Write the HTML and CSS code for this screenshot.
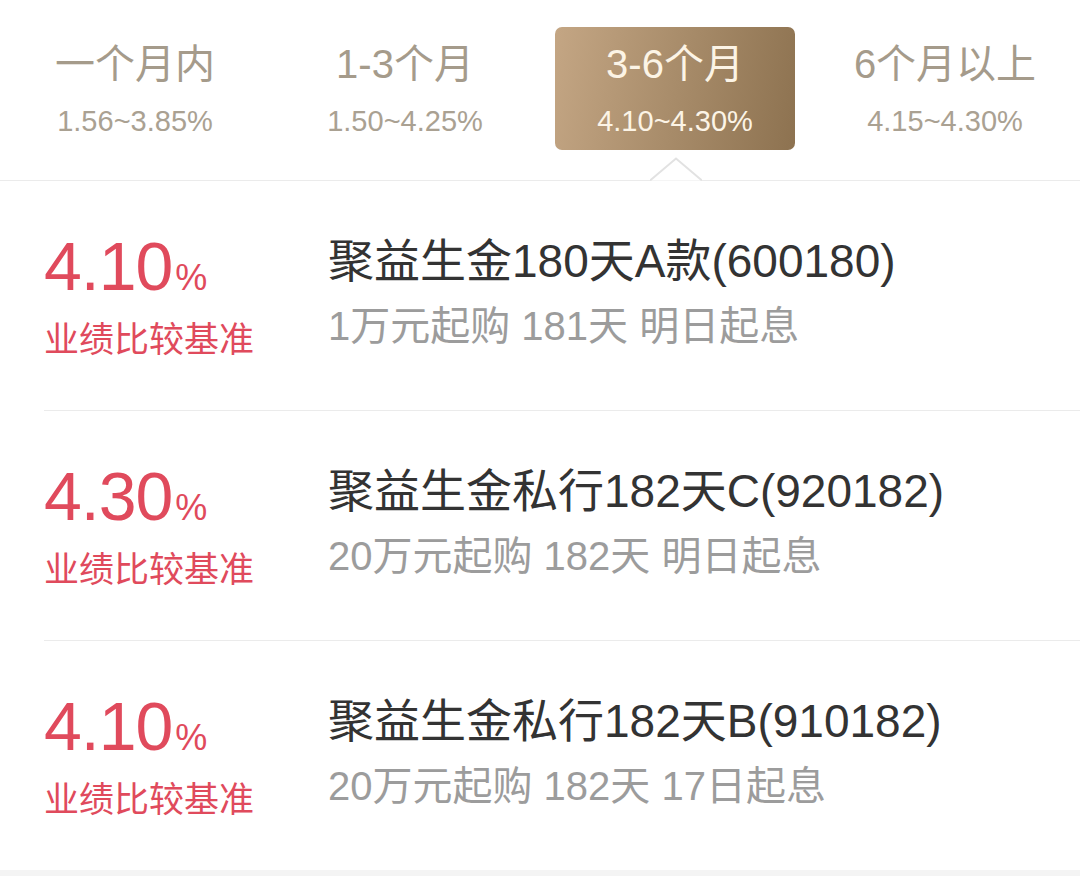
FILE: index.html
```html
<!DOCTYPE html>
<html lang="zh-CN">
<head>
  <meta charset="UTF-8">
  <title>理财产品</title>
  <link rel="stylesheet" href="styles.css">
</head>
<body>
  <header class="tabs">
    <div class="tab">
      <div class="tab-title">一个月内</div>
      <div class="tab-rate">1.56~3.85%</div>
    </div>
    <div class="tab">
      <div class="tab-title">1-3个月</div>
      <div class="tab-rate">1.50~4.25%</div>
    </div>
    <div class="tab active">
      <div class="tab-title">3-6个月</div>
      <div class="tab-rate">4.10~4.30%</div>
      <svg class="caret" width="52" height="24" viewBox="0 0 52 24">
        <polyline points="0,23.5 26,1.5 52,23.5" fill="#fff" stroke="#e2e2e2" stroke-width="2"/>
      </svg>
    </div>
    <div class="tab">
      <div class="tab-title">6个月以上</div>
      <div class="tab-rate">4.15~4.30%</div>
    </div>
  </header>

  <ul class="list">
    <li class="item">
      <div class="left">
        <div class="rate">4.10<span class="pct">%</span></div>
        <div class="label">业绩比较基准</div>
      </div>
      <div class="right">
        <div class="name">聚益生金180天A款(600180)</div>
        <div class="info">1万元起购 181天 明日起息</div>
      </div>
    </li>
    <li class="item">
      <div class="left">
        <div class="rate">4.30<span class="pct">%</span></div>
        <div class="label">业绩比较基准</div>
      </div>
      <div class="right">
        <div class="name">聚益生金私行182天C(920182)</div>
        <div class="info">20万元起购 182天 明日起息</div>
      </div>
    </li>
    <li class="item last">
      <div class="left">
        <div class="rate">4.10<span class="pct">%</span></div>
        <div class="label">业绩比较基准</div>
      </div>
      <div class="right">
        <div class="name">聚益生金私行182天B(910182)</div>
        <div class="info">20万元起购 182天 17日起息</div>
      </div>
    </li>
  </ul>
</body>
</html>
```

FILE: styles.css
```css
* {
  margin: 0;
  padding: 0;
  box-sizing: border-box;
}

body {
  font-family: "Liberation Sans", "Noto Sans CJK SC", sans-serif;
  background: #f4f4f4;
  width: 1080px;
  height: 876px;
  overflow: hidden;
}

.tabs {
  display: grid;
  grid-template-columns: repeat(4, 1fr);
  height: 181px;
  padding-top: 27px;
  background: #fff;
  border-bottom: 1px solid #ebebeb;
}

.tab {
  position: relative;
  margin: 0 15px;
  height: 123px;
  text-align: center;
  padding-top: 12px;
  color: #a59b8b;
  border-radius: 7px;
}

.tab-title {
  font-size: 40px;
  line-height: 50px;
}

.tab-rate {
  margin-top: 14px;
  font-size: 29px;
  line-height: 36px;
  color: #aaa192;
}

.tab.active {
  background: linear-gradient(100deg, #c4a684 0%, #a88c6a 50%, #8d7250 100%);
  color: #fcf4e6;
}

.tab.active .tab-rate {
  color: #fcf4e6;
}

.caret {
  position: absolute;
  left: 95px;
  top: 130px;
}

.list {
  list-style: none;
  background: #fff;
}

.item {
  display: flex;
  height: 230px;
  margin-left: 44px;
  padding-top: 40px;
  border-bottom: 1px solid #ebebeb;
}

.item.last {
  border-bottom: none;
  height: 229px;
}

.left {
  width: 284px;
  color: #e04a5c;
}

.rate {
  margin-top: 5px;
  font-size: 68px;
  line-height: 80px;
  letter-spacing: -1px;
}

.pct {
  font-size: 36px;
  letter-spacing: 0;
  margin-left: 3px;
}

.label {
  margin-top: -3px;
  font-size: 35px;
  line-height: 50px;
}

.name {
  margin-top: 10px;
  font-size: 46px;
  line-height: 60px;
  color: #333;
}

.info {
  margin-top: 10px;
  font-size: 40px;
  line-height: 50px;
  color: #9c9c9c;
}
```
